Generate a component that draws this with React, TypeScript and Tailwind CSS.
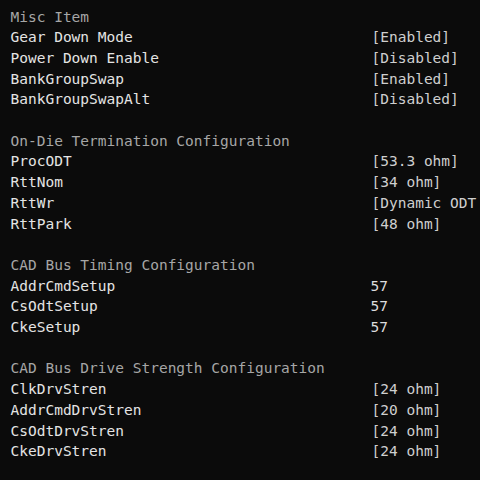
const sections = [
  {
    title: 'Misc Item',
    rows: [
      ['Gear Down Mode', '[Enabled]'],
      ['Power Down Enable', '[Disabled]'],
      ['BankGroupSwap', '[Enabled]'],
      ['BankGroupSwapAlt', '[Disabled]'],
    ],
  },
  {
    title: 'On-Die Termination Configuration',
    rows: [
      ['ProcODT', '[53.3 ohm]'],
      ['RttNom', '[34 ohm]'],
      ['RttWr', '[Dynamic ODT'],
      ['RttPark', '[48 ohm]'],
    ],
  },
  {
    title: 'CAD Bus Timing Configuration',
    rows: [
      ['AddrCmdSetup', '57'],
      ['CsOdtSetup', '57'],
      ['CkeSetup', '57'],
    ],
  },
  {
    title: 'CAD Bus Drive Strength Configuration',
    rows: [
      ['ClkDrvStren', '[24 ohm]'],
      ['AddrCmdDrvStren', '[20 ohm]'],
      ['CsOdtDrvStren', '[24 ohm]'],
      ['CkeDrvStren', '[24 ohm]'],
    ],
  },
];

export default function App() {
  return (
    <main className="w-[480px] h-[480px] overflow-hidden bg-[#0b0b0b] pt-[6.5px] pl-[10.5px] font-['DejaVu_Sans_Mono',monospace] text-[14.5px] leading-[20.7px]">
      {sections.map((section) => (
        <div key={section.title} className="mb-[20.7px]">
          <div className="whitespace-nowrap text-[#a6a6a6]">{section.title}</div>
          {section.rows.map(([name, value]) => (
            <div key={name} className="flex whitespace-nowrap">
              <div className="w-[360px] shrink-0 text-[#e4e4e4]">{name}</div>
              <div className={value.startsWith('[') ? 'pl-[1px] text-[#cfcfcf]' : 'text-[#dcdcdc]'}>{value}</div>
            </div>
          ))}
        </div>
      ))}
    </main>
  );
}
